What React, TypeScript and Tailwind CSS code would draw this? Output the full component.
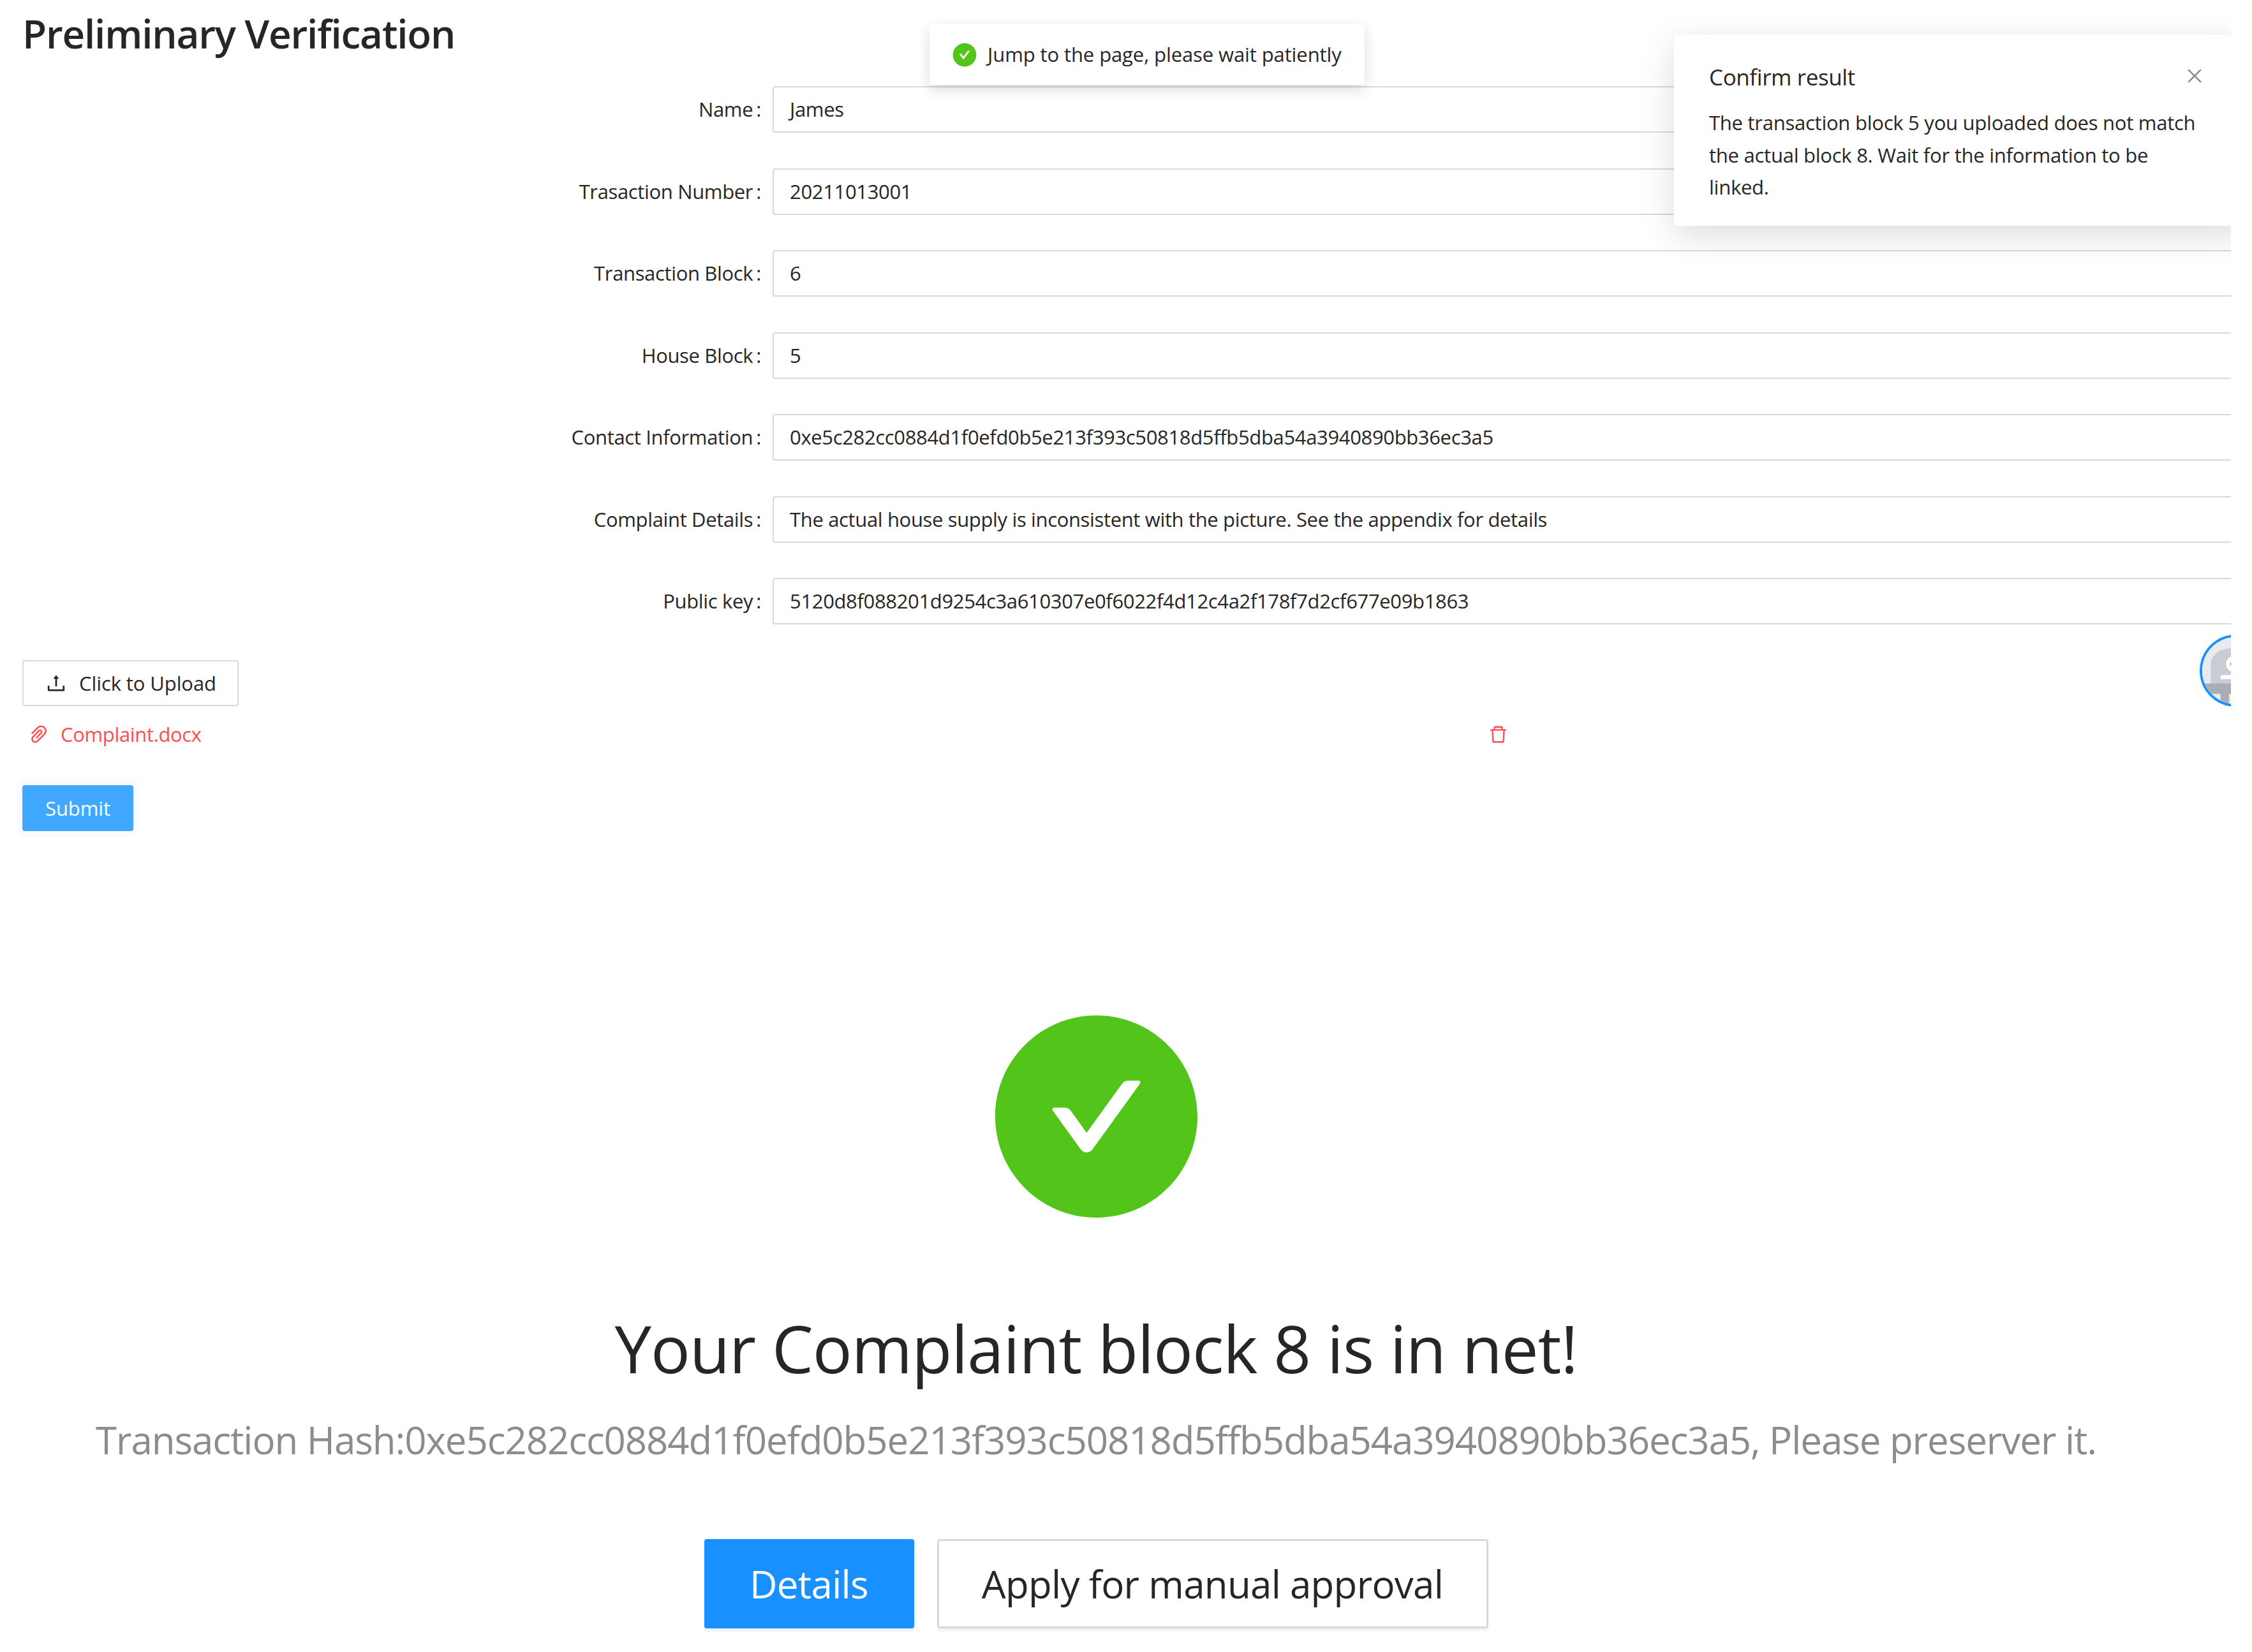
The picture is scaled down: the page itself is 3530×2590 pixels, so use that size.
import { AiFillCheckCircle, AiOutlineClose, AiOutlineDelete, AiOutlinePaperClip, AiOutlineUpload } from "react-icons/ai";

const fields = [
    { label: "Name", value: "James" },
    { label: "Trasaction Number", value: "20211013001" },
    { label: "Transaction Block", value: "6" },
    { label: "House Block", value: "5" },
    { label: "Contact Information", value: "0xe5c282cc0884d1f0efd0b5e213f393c50818d5ffb5dba54a3940890bb36ec3a5" },
    { label: "Complaint Details", value: "The actual house supply is inconsistent with the picture. See the appendix for details" },
    { label: "Public key", value: "5120d8f088201d9254c3a610307e0f6022f4d12c4a2f178f7d2cf677e09b1863" },
];

function Robot() {
    return (
        <svg viewBox="0 0 110 110" className="h-full w-full">
            <rect width="110" height="110" fill="#e8eaee" />
            <path d="M14 78V45C14 28 30 18 52 18h58v60z" fill="#c9ccd2" />
            <circle cx="52" cy="44" r="13" fill="#fff" />
            <circle cx="52" cy="44" r="6" fill="#6b6e76" />
            <rect x="30" y="62" width="80" height="7" rx="3" fill="#fff" />
            <rect x="0" y="76" width="110" height="17" fill="#a9adb5" />
            <rect x="30" y="90" width="14" height="20" fill="#a9adb5" />
            <rect x="50" y="90" width="14" height="20" fill="#a9adb5" />
        </svg>
    );
}

export default function App() {
    return (
        <div className="h-[2590px] w-[3530px] bg-white font-['Open_Sans',sans-serif] text-[#262626]">
            <div className="relative h-full w-[3497px] overflow-hidden pl-[35px]">
                <h2 className="flex h-[135px] items-start pt-[6px] text-[62px] leading-[92px] font-semibold tracking-[-1.2px]">
                    Preliminary Verification
                </h2>

                <div className="grid grid-cols-[1176px_1fr] gap-y-[55.5px] text-[31px] tracking-[-0.35px]">
                    {fields.map((field) => (
                        <div key={field.label} className="col-span-2 grid grid-cols-subgrid">
                            <label className="flex h-[73px] items-center justify-end">{field.label}<span className="ml-[5px] mr-[18px]">:</span></label>
                            <div className="flex h-[73px] w-[2400px] items-center rounded-[4px] border-2 border-[#d9d9d9] pl-[25px]">{field.value}</div>
                        </div>
                    ))}
                </div>

                <button className="mt-[56px] flex h-[72px] w-[339px] items-center justify-center gap-[18px] rounded-[4px] border-2 border-[#d9d9d9] text-[31px] tracking-[-0.1px]">
                    <AiOutlineUpload size={36} />
                    Click to Upload
                </button>

                <div className="mt-[19px] flex h-[50px] w-[2330px] items-center justify-between text-[31px] tracking-[-0.35px] text-[#ff4d4f]">
                    <div className="flex items-center gap-[16px] pl-[8px]">
                        <AiOutlinePaperClip size={36} />
                        Complaint.docx
                    </div>
                    <AiOutlineDelete size={33} />
                </div>

                <button className="mt-[55px] flex h-[72px] w-[174px] items-center justify-center rounded-[4px] bg-[#40a9ff] text-[31px] tracking-[-0.1px] text-white shadow-[0_0_0_10px_#f8fbff]">
                    Submit
                </button>

                <div className="mt-[289px] flex w-[3366px] flex-col items-center">
                    <svg viewBox="64 64 896 896" className="h-[317px] w-[317px] fill-[#52c41a]">
                        <path d="M512 64C264.6 64 64 264.6 64 512s200.6 448 448 448 448-200.6 448-448S759.4 64 512 64zm193.5 301.7l-210.6 292a31.8 31.8 0 0 1-51.7 0L318.5 484.9c-3.8-5.3 0-12.7 6.5-12.7h46.9c10.2 0 19.9 4.9 25.9 13.3l71.2 98.8 157.2-218c6-8.3 15.6-13.3 25.9-13.3H699c6.5 0 10.3 7.4 6.5 12.7z" />
                    </svg>
                    <h1 className="mt-[136px] text-[103px] leading-[136px] tracking-[-1px]">Your Complaint block 8 is in net!</h1>
                    <p className="mt-[30px] whitespace-nowrap text-[60px] leading-[92px] tracking-[-1.05px] text-[#8c8c8c]">
                        Transaction Hash:0xe5c282cc0884d1f0efd0b5e213f393c50818d5ffb5dba54a3940890bb36ec3a5, Please preserver it.
                    </p>
                    <div className="mt-[110px] flex gap-[36px] text-[60px] tracking-[-0.7px]">
                        <button className="h-[140px] w-[329px] rounded-[4px] bg-[#1890ff] text-white shadow-[0_5px_0_#f5f5f5]">Details</button>
                        <button className="h-[140px] w-[864px] rounded-[4px] border-[3px] border-[#d9d9d9] shadow-[0_5px_0_#f5f5f5]">Apply for manual approval</button>
                    </div>
                </div>

                {/* message toast */}
                <div className="absolute left-[1457px] top-[38px] flex h-[95px] w-[682px] items-center gap-[15px] bg-white pl-[34px] text-[31px] tracking-[-0.1px] shadow-[0_7px_20px_rgba(0,0,0,0.15)]">
                    <AiFillCheckCircle size={42} className="text-[#52c41a]" />
                    Jump to the page, please wait patiently
                </div>

                {/* notification, runs off the right edge */}
                <div className="absolute left-[2624px] top-[55px] h-[299px] w-[900px] bg-white pl-[55px] pt-[40px] shadow-[0_14px_50px_rgba(0,0,0,0.14)]">
                    <div className="text-[35px] leading-[52px] tracking-[-0.4px]">Confirm result</div>
                    <AiOutlineClose size={32} className="absolute left-[800px] top-[48px] text-[#8c8c8c]" />
                    <p className="mt-[20px] w-[775px] text-[31px] leading-[50.5px] tracking-[-0.25px]">
                        The transaction block 5 you uploaded does not match the actual block 8. Wait for the information to be linked.
                    </p>
                </div>

                {/* floating avatar */}
                <div className="absolute left-[3448px] top-[995px] h-[113px] w-[113px] overflow-hidden rounded-full border-[4px] border-[#1890ff]">
                    <Robot />
                </div>
            </div>
        </div>
    );
}
